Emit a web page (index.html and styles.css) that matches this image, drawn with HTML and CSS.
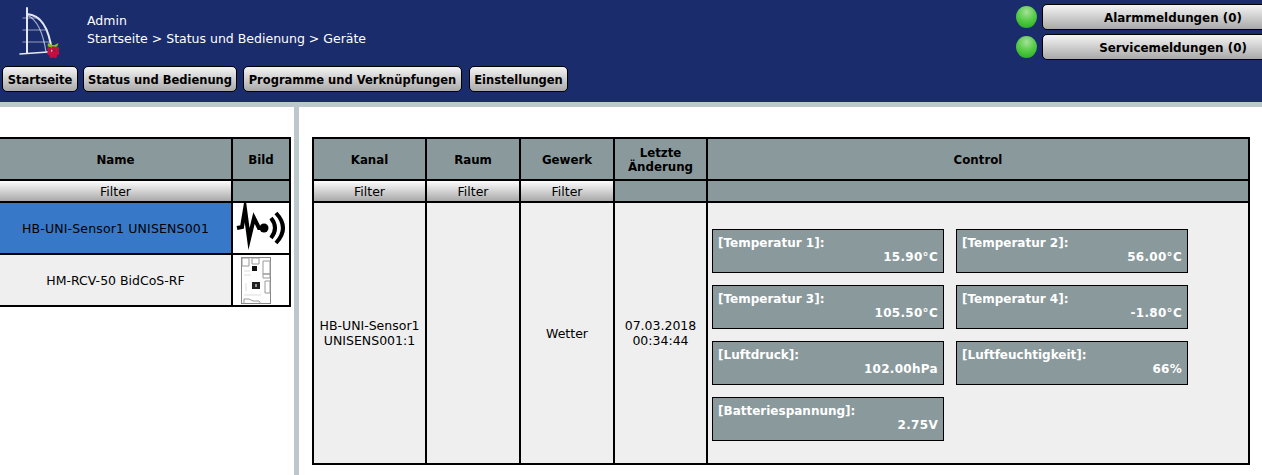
FILE: index.html
```html
<!DOCTYPE html>
<html lang="de">
<head>
<meta charset="utf-8">
<title>Geräte</title>
<link rel="stylesheet" href="styles.css">
</head>
<body>
<header class="header">
  <div class="header-left">
    <div class="brand">
      <svg class="logo" width="50" height="60" viewBox="0 0 50 60">
        <g fill="none" stroke="#e4e8f2" stroke-linecap="round">
          <path d="M8 1V46" stroke-width="2"/>
          <path d="M8 7C22 8 30 20 33 45" stroke-width="2"/>
          <path d="M8 8C17 12 24 25 27 45" stroke-width="1.2" opacity=".7"/>
          <path d="M4 11H20M4 23H28M4 35H32" stroke-width="1.2" opacity=".6"/>
          <path d="M1 47L29 45" stroke-width="1.6"/>
        </g>
        <path d="M29 36l4 2 1.500 0 1-0 4-2 -1 3 -3 2h-4l-3-2z" fill="#7fc11f"/>
        <g fill="#c5103f">
          <circle cx="30.500" cy="42" r="2.300"/><circle cx="34.500" cy="41.500" r="2.300"/><circle cx="38" cy="42" r="2.300"/>
          <circle cx="30.500" cy="46" r="2.300"/><circle cx="34.500" cy="46" r="2.300"/><circle cx="38" cy="46" r="2.300"/>
          <circle cx="32.500" cy="49" r="2"/><circle cx="36" cy="49" r="2"/>
        </g>
      </svg>
      <div class="crumbs">
        <div>Admin</div>
        <div>Startseite &gt; Status und Bedienung &gt; Geräte</div>
      </div>
    </div>
    <nav class="nav">
      <a class="btn nav-start">Startseite</a>
      <a class="btn nav-status">Status und Bedienung</a>
      <a class="btn nav-prog">Programme und Verknüpfungen</a>
      <a class="btn nav-set">Einstellungen</a>
    </nav>
  </div>
  <div class="header-right">
    <div class="alarm"><span class="led"></span><a class="btn alarm-btn">Alarmmeldungen (0)</a></div>
    <div class="alarm"><span class="led"></span><a class="btn alarm-btn">Servicemeldungen (0)</a></div>
  </div>
</header>
<main class="main">
  <section class="pane-left">
    <table class="grid grid-left">
      <colgroup><col class="c-name"><col class="c-img"></colgroup>
      <tr class="r-head"><th>Name</th><th>Bild</th></tr>
      <tr class="r-filter"><td class="filter">Filter</td><td class="nofilter"></td></tr>
      <tr class="r-dev"><td class="sel">HB-UNI-Sensor1 UNISENS001</td><td class="img">
        <svg class="thumb" width="57" height="50" viewBox="0 0 57 50">
          <polyline points="4,25 9,24 12,6 16,36 21,15 26,25 31,25" fill="none" stroke="#000" stroke-width="4" stroke-linejoin="miter" stroke-miterlimit="8"/>
          <circle cx="31" cy="25" r="4.500" fill="#000"/>
          <path d="M38 15Q46 25 38 35" fill="none" stroke="#000" stroke-width="4"/>
          <path d="M43 10Q57 25 43 40" fill="none" stroke="#000" stroke-width="4"/>
        </svg>
      </td></tr>
      <tr class="r-dev"><td class="plain-img">HM-RCV-50 BidCoS-RF</td><td class="img">
        <svg class="thumb" width="57" height="50" viewBox="0 0 57 50">
          <g transform="translate(8 2)">
            <rect x=".5" y=".5" width="29" height="46" fill="#fff" stroke="#888"/>
            <path d="M1 1H8V9H1ZM11 1H18V7H11ZM22 4H29V17H22ZM22 17H29V21H22ZM24 24H29V36H24ZM3 47V42H8L12 44H18L20 47" fill="none" stroke="#999"/>
            <rect x="11" y="9" width="5" height="5" fill="#111"/>
            <rect x="11" y="25" width="8" height="7" fill="#222"/>
            <rect x="14" y="27" width="2" height="3" fill="#999"/>
            <path d="M3 14H9M3 18H10M3 38H20M5 26V34" stroke="#ddd" fill="none"/>
          </g>
        </svg>
      </td></tr>
    </table>
  </section>
  <section class="pane-right">
    <table class="grid grid-right">
      <colgroup><col class="c-kanal"><col class="c-raum"><col class="c-gewerk"><col class="c-time"><col class="c-control"></colgroup>
      <tr class="r-head"><th>Kanal</th><th>Raum</th><th>Gewerk</th><th>Letzte<br>Änderung</th><th>Control</th></tr>
      <tr class="r-filter"><td class="filter">Filter</td><td class="filter">Filter</td><td class="filter">Filter</td><td class="nofilter"></td><td class="nofilter"></td></tr>
      <tr class="r-body">
        <td class="plain">HB-UNI-Sensor1<br>UNISENS001:1</td>
        <td class="plain"></td>
        <td class="plain">Wetter</td>
        <td class="plain">07.03.2018<br>00:34:44</td>
        <td class="plain control">
          <div class="values">
            <div class="value"><div>[Temperatur 1]:</div><div class="num">15.90°C</div></div>
            <div class="value"><div>[Temperatur 2]:</div><div class="num">56.00°C</div></div>
            <div class="value"><div>[Temperatur 3]:</div><div class="num">105.50°C</div></div>
            <div class="value"><div>[Temperatur 4]:</div><div class="num">-1.80°C</div></div>
            <div class="value"><div>[Luftdruck]:</div><div class="num">102.00hPa</div></div>
            <div class="value"><div>[Luftfeuchtigkeit]:</div><div class="num">66%</div></div>
            <div class="value"><div>[Batteriespannung]:</div><div class="num">2.75V</div></div>
          </div>
        </td>
      </tr>
    </table>
  </section>
</main>
</body>
</html>
```
FILE: styles.css
```css
* { box-sizing: border-box; }
html, body { margin: 0; height: 475px; overflow: hidden; }
body { background: #fff; color: #000; font: 12.5px/15px "DejaVu Sans", Verdana, sans-serif; }

.header { height: 107px; background: #1a2c6c; border-bottom: 5px solid #bcc9cc; display: flex; justify-content: space-between; overflow: hidden; }
.header-left { display: flex; flex-direction: column; }
.brand { display: flex; height: 66px; }
.logo { margin: 7px 0 0 19px; }
.crumbs { color: #fff; margin: 12px 0 0 18px; line-height: 18px; }
.nav { display: flex; padding-left: 2px; }
.nav-start { width: 76px; }
.nav-status { margin-left: 5px; width: 154px; }
.nav-prog { margin-left: 6px; width: 219px; }
.nav-set { margin-left: 7px; width: 99px; }

.btn { height: 26px; border: 1px solid #000; border-radius: 5px; background: linear-gradient(#f4f4f4, #a9a9a9); font-weight: bold; font-size: 11.5px; line-height: 26px; text-align: center; white-space: nowrap; display: block; }

.header-right { padding-top: 4px; width: 246px; flex: none; }
.alarm { display: flex; align-items: center; height: 26px; margin-bottom: 4px; }
.led { width: 21px; height: 22px; flex: none; border-radius: 50%; background: radial-gradient(circle at 50% 28%, #a6e09a 0%, #58cc48 45%, #1ea818 100%); }
.alarm-btn { width: 262px; flex: none; margin-left: 5px; font-size: 11.9px; }

.main { display: flex; height: 368px; }
.pane-left { width: 299px; flex: none; border-right: 5px solid #bcc9cc; padding-top: 30px; }
.pane-right { padding: 30px 0 0 13px; }

.grid { border-collapse: collapse; table-layout: fixed; }
.grid th, .grid td { border: 2px solid #000; padding: 0; text-align: center; vertical-align: middle; font-weight: normal; }
.grid th { background: #8a9a9c; font-weight: bold; font-size: 11.8px; line-height: 14px; padding-top: 1px; }
.grid-left { width: 293px; margin-left: -2px; }
.c-name { width: 233px; }
.c-img { width: 58px; }
.grid-right { width: 938px; }
.c-kanal { width: 113px; }
.c-raum { width: 94px; }
.c-gewerk { width: 94px; }
.c-time { width: 93px; }
.c-control { width: 542px; }
.r-head { height: 42px; }
.r-filter { height: 22px; }
.r-dev { height: 52px; }
.r-body { height: 262px; }
.grid td.filter { background: linear-gradient(#fdfdfd, #a9a9a9); }
.grid td.nofilter { background: #8a9a9c; }
.grid td.sel { background: #3778c8; letter-spacing: .16px; }
.grid td.plain, .grid td.plain-img { background: #efefef; }
.grid td.img { background: #fff; line-height: 0; }
.thumb { display: block; }
.grid td.control { vertical-align: top; padding: 26px 0 0 4px; }

.values { display: grid; grid-template-columns: 232px 232px; grid-auto-rows: 44px; gap: 12px; }
.value { background: #8a9a9c; border: 1px solid #000; color: #fff; font-weight: bold; font-size: 12px; line-height: 14px; padding: 6px 5px 0; text-align: left; }
.num { text-align: right; letter-spacing: .3px; }
```
